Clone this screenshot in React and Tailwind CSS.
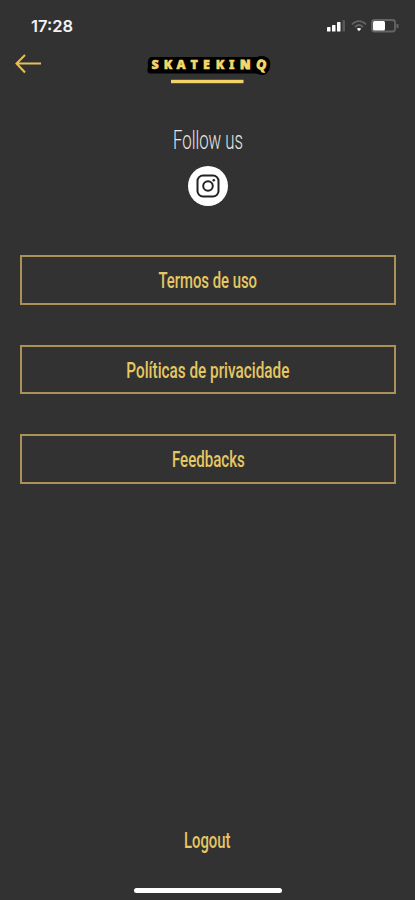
import { clsx } from "clsx";

// Menu entries, each label is squeezed to get the condensed look
const links = [
  { id: "terms", label: "Termos de uso", squeeze: "scale-x-[0.66]" },
  { id: "privacy", label: "Políticas de privacidade", squeeze: "scale-x-[0.68]" },
  { id: "feedbacks", label: "Feedbacks", squeeze: "scale-x-[0.67]" },
];

const StatusBar = () => (
  <div className="flex h-[50px] items-center justify-between pr-[15px] pl-[31px]">
    <span className="pt-px font-['Inter'] text-[16.5px] leading-5 font-semibold text-[#f2f2f2]">
      17:28
    </span>
    <svg width="73" height="16" viewBox="0 0 73 16" fill="none">
      {/* Signal */}
      <rect x="0" y="10" width="3.5" height="4.5" rx="0.6" fill="#fff" />
      <rect x="5" y="8" width="3.5" height="6.5" rx="0.6" fill="#fff" />
      <rect x="10" y="5" width="3.5" height="9.5" rx="0.6" fill="#fff" />
      <rect x="15.5" y="3" width="2.5" height="11.5" rx="0.6" fill="#585858" />
      {/* Wifi */}
      <path d="M25 7.5C29 3 35 3 39 7.5" stroke="#626262" strokeWidth="1.8" />
      <path d="M28 10C30.5 7.5 33.5 7.5 36 10" stroke="#626262" strokeWidth="1.8" />
      <path d="M29.8 11.8Q32 10 34.2 11.8L32 14.2Z" fill="#fff" />
      {/* Battery */}
      <rect x="45" y="3" width="23" height="11.5" rx="2.5" stroke="#646464" strokeWidth="1.8" />
      <rect x="46" y="4" width="12" height="9.5" rx="1.5" fill="#fff" />
      <path d="M70.5 7V11" stroke="#646464" strokeWidth="2" />
    </svg>
  </div>
);

const Logo = () => (
  <svg
    className="font-['Noto_Sans'] font-black"
    width="130"
    height="26"
    viewBox="0 0 130 26"
    fill="#f5d76b"
    stroke="#f5d76b"
    strokeWidth="0.5"
    fontSize="12.5"
  >
    {/* Black outline behind the letters */}
    <path
      d="M8 5H114C118 3 125 4 127 9C128 14 126 22 120 23C116 23 114 21 111 21.5H7C4 21.5 4 18 5 15C4.500 11 4.500 6 8 5Z"
      fill="#000"
      stroke="none"
    />
    <text x="8.5 20.8 33.5 47.5 60 72.8 86" y="17.3">
      SKATEKI
    </text>
    <text x="97" y="17.3" strokeWidth="1" textLength="10.5" lengthAdjust="spacingAndGlyphs">
      N
    </text>
    <text
      x="113"
      y="17.3"
      fontSize="13.5"
      textLength="10.5"
      lengthAdjust="spacingAndGlyphs"
      transform="rotate(12 118 13)"
    >
      Q
    </text>
  </svg>
);

const Header = () => (
  <header className="flex h-[42px] items-start justify-between pr-[15px] pl-[15px]">
    <button aria-label="Voltar" className="w-[26px] pt-1">
      <svg width="26" height="20" viewBox="0 0 26 20" fill="none" stroke="#e4bf5c" strokeWidth="2">
        <path d="M10 1L1.5 9.5L10 18.5M1.5 9.5H26" />
      </svg>
    </button>
    <div className="flex flex-col items-center gap-px pt-[2px]">
      <Logo />
      <svg width="73" height="5" viewBox="0 0 73 5">
        <rect y="0.8" width="72.5" height="3.4" fill="#f2d269" />
      </svg>
    </div>
    <div className="w-[26px]" />
  </header>
);

const App = () => {
  return (
    <div className="flex h-[900px] w-full flex-col bg-[#323232] font-['Roboto',sans-serif]">
      <StatusBar />
      <Header />

      <section className="flex flex-col items-center pt-[33px]">
        <h2 className="h-8 scale-x-[0.67] pl-px text-[25px] leading-8 font-light whitespace-nowrap text-[#e6e6e6]">
          Follow us
        </h2>
        <button
          aria-label="Instagram"
          className="mt-[9px] flex size-10 items-center justify-center rounded-full bg-white"
        >
          <svg width="24" height="24" viewBox="0 0 24 24" fill="none" stroke="#222" strokeWidth="2">
            <rect x="1.5" y="1.5" width="21" height="21" rx="5.5" />
            <circle cx="12" cy="12" r="4.8" />
            <circle cx="17.8" cy="6.2" r="1.3" fill="#222" stroke="none" />
          </svg>
        </button>
      </section>

      <nav className="mt-[49px] flex flex-col gap-10 pr-[19px] pl-5">
        {links.map((link) => (
          <button
            key={link.id}
            className="flex h-[49.5px] items-center justify-center border-2 border-[#ab9157] pt-[3px] text-[22.5px] text-[#e5c763]"
          >
            <span className={clsx("font-medium whitespace-nowrap", link.squeeze)}>
              {link.label}
            </span>
          </button>
        ))}
      </nav>

      <footer className="mt-auto flex flex-col items-center pb-[7px]">
        <button className="scale-x-[0.66] text-[22.5px] leading-8 font-medium text-[#e5c763]">
          Logout
        </button>
        <div className="mt-[32px] h-[5px] w-[148px] rounded-full bg-white" />
      </footer>
    </div>
  );
};

export default App;
